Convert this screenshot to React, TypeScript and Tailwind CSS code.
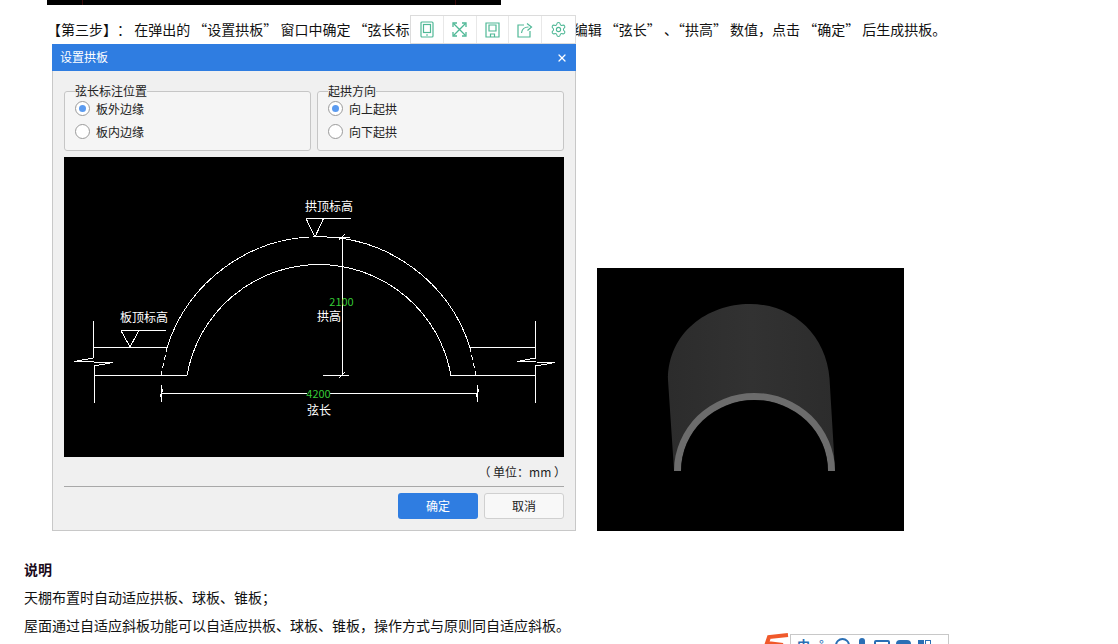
import React from 'react';
import { Settings, X } from 'lucide-react';

const font = 'font-["Noto_Sans_CJK_SC","Microsoft_YaHei","Liberation_Sans",sans-serif]';

/**Floating toolbar over the article text*/
function ToolButton({ children, last }: { children: React.ReactNode; last?: boolean }) {
  return (
    <div className={`flex h-full w-[33px] items-center justify-center text-[#4fb896] ${last ? '' : 'border-r border-[#e8e8e8]'}`}>
      {children}
    </div>
  );
}

function Toolbar() {
  return (
    <div className="absolute left-[410px] top-[15px] z-10 flex h-[29px] w-[166px] border border-[#dcdcdc] bg-white">
      <ToolButton>
        <svg width="14" height="17" viewBox="0 0 14 17" fill="none" stroke="currentColor" strokeWidth="1.2">
          <rect x="1" y="1" width="12" height="15" rx="1" />
          <rect x="3.5" y="3.5" width="7" height="8" />
          <path d="M6 14h2" />
        </svg>
      </ToolButton>
      <ToolButton>
        <svg width="15" height="15" viewBox="0 0 15 15" fill="none" stroke="currentColor" strokeWidth="1.3">
          <path d="M1.5 1.5l12 12M13.5 1.5l-12 12" />
          <path d="M1 5V1h4M10 1h4v4M14 10v4h-4M5 14H1v-4" />
        </svg>
      </ToolButton>
      <ToolButton>
        <svg width="15" height="16" viewBox="0 0 15 16" fill="none" stroke="currentColor" strokeWidth="1.2">
          <path d="M1 1h13v14H1z" />
          <path d="M4 3h7v6H4z" />
          <path d="M5.5 15v-3h4v3" />
        </svg>
      </ToolButton>
      <ToolButton>
        <svg width="16" height="16" viewBox="0 0 16 16" fill="none" stroke="currentColor" strokeWidth="1.2">
          <path d="M7 3H1v12h12V9" />
          <path d="M4.5 11c.5-4 3-6 7-6" />
          <path d="M10 1.5l4.5 3.5-4 3.5" />
        </svg>
      </ToolButton>
      <ToolButton last>
        <Settings size={17} strokeWidth={1.5} />
      </ToolButton>
    </div>
  );
}

function Radio({ label, checked }: { label: string; checked?: boolean }) {
  return (
    <div className="flex h-[23px] items-center gap-[6px]">
      <span className="flex h-[15px] w-[15px] items-center justify-center rounded-full border border-[#9a9a9a] bg-white">
        {checked && <span className="h-[7px] w-[7px] rounded-full bg-[#5b9bf0]" />}
      </span>
      <span className="text-xs text-[#222]">{label}</span>
    </div>
  );
}

function OptionGroup({ title, options }: { title: string; options: string[] }) {
  return (
    <fieldset className="h-[67px] flex-1 rounded-[3px] border border-[#c6c6c6] bg-[#f5f5f5] pl-[10px]">
      <legend className="bg-[#f0f0f0] text-xs leading-[14px] text-[#222]">{title}</legend>
      <div className="-mt-px">
        {options.map((o, i) => (
          <Radio key={o} label={o} checked={i === 0} />
        ))}
      </div>
    </fieldset>
  );
}

/**The CAD sketch of the arched slab*/
function ArchDrawing() {
  const t = { fill: '#fff', fontSize: 12, textAnchor: 'middle' as const };
  const g = { fill: '#35c935', fontSize: 11, textAnchor: 'middle' as const };
  return (
    <svg width="500" height="300" viewBox="0 0 500 300" className="block bg-black" fill="none" stroke="#fff" strokeWidth="1">
      <g shapeRendering="crispEdges">
        <path d="M29.5 164V201L10 204.5 49 205.5 30 209V246" />
        <path d="M471.5 164V201L453 204.5 491 205.5 471.5 209V246" />
        <path d="M30 190.5H103M30 218.5H123M406 190.5H471M387 218.5H471" />
        <path d="M103 190.5A159 159 0 0 1 406 190.5" />
        <path d="M103 190.5L97 218.5M406 190.5L412 218.5" strokeDasharray="5 3" />
        <path d="M123 218.5A134 134 0 0 1 387 218.5" />
        <path d="M57 173.5H102M57 173.5L66 190L75 173.5" />
        <path d="M242 61.5H287M242 61.5L251 80L259.5 61.5" />
        <path d="M278.5 80V218M259 218.5H285M270 80.5H286M275 221L281 215M275 83L281 77" />
        <path d="M97.5 228V245M96 240L99 232M97 236.5H243M266 236.5H413M413.5 228V245M412 240L415 232" />
      </g>
      <g stroke="none">
        <text x="80" y="165" {...t}>板顶标高</text>
        <text x="265" y="54" {...t}>拱顶标高</text>
        <text x="265" y="164" {...t}>拱高</text>
        <text x="255" y="258" {...t}>弦长</text>
        <text x="277.5" y="149" {...g}>2100</text>
        <text x="254.5" y="241" {...g}>4200</text>
      </g>
    </svg>
  );
}

function Dialog() {
  return (
    <div className="h-[487px] w-[524px] border border-t-0 border-[#c8c8c8] bg-[#f0f0f0]">
      <div className="-mx-px flex h-[27px] items-center justify-between bg-[#2f7de1] pb-[2px] pl-2 pr-2 text-xs text-white">
        <span>设置拱板</span>
        <X size={12} strokeWidth={2.5} className="mt-[2px]" />
      </div>
      <div className="px-[11px]">
        <div className="mt-[13px] flex gap-[6px]">
          <OptionGroup title="弦长标注位置" options={['板外边缘', '板内边缘']} />
          <OptionGroup title="起拱方向" options={['向上起拱', '向下起拱']} />
        </div>
        <div className="mt-[6px]">
          <ArchDrawing />
        </div>
        <div className="-mr-[2px] flex h-[29px] items-center justify-end text-xs text-[#222]">（ 单位：mm ）</div>
        <div className="border-t border-[#a8a8a8]" />
        <div className="mt-[6px] flex justify-end gap-[6px] text-xs">
          <button className="h-[26px] w-[80px] rounded-[3px] bg-[#2f7de1] text-white">确定</button>
          <button className="h-[26px] w-[80px] rounded-[3px] border border-[#d0d0d0] bg-[#f8f8f8] text-[#222]">取消</button>
        </div>
      </div>
    </div>
  );
}

/**Rendered 3D preview of the arch*/
function ArchPreview() {
  return (
    <svg width="307" height="263" viewBox="0 0 307 263" className="block bg-black">
      <defs>
        <linearGradient id="shell" x1="0" y1="0" x2="1" y2="0">
          <stop offset="0" stopColor="#2c2c2c" />
          <stop offset="0.5" stopColor="#323232" />
          <stop offset="1" stopColor="#2c2c2c" />
        </linearGradient>
      </defs>
      <path d="M77 202L71 112C71 65 110 36 153 36C198 36 233 70 233 119L238 202Z" fill="url(#shell)" />
      <path d="M77 203A80.5 78 0 0 1 238 203H231A73.5 71 0 0 0 84 203Z" fill="#6c6c6c" />
      <path d="M84 203A73.5 71 0 0 1 231 203Z" fill="#000" />
    </svg>
  );
}

/**Input method bar cut off by the bottom of the window*/
function ImeBar() {
  return (
    <div className="absolute left-[763px] top-[632px] z-10 h-[24px] w-[186px]">
      <div className="ml-[27px] mt-[2px] flex h-[22px] items-start border border-[#c8c8c8] bg-white pt-[2px] text-[13px] leading-[16px] text-[#2a6fb5]">
        <span className="ml-[6px] w-[16px] font-bold">中</span>
        <span className="ml-[6px] w-[10px]">°</span>
        <span className="ml-[6px] mt-px h-[15px] w-[15px] rounded-full border-2 border-[#2a6fb5]" />
        <span className="ml-[9px] mt-px h-[15px] w-[6px] rounded-full bg-[#2a6fb5]" />
        <span className="ml-[9px] mt-[3px] h-[13px] w-[16px] rounded-[2px] border-2 border-[#2a6fb5]" />
        <span className="ml-[6px] mt-[3px] h-[13px] w-[15px] rounded-t-[4px] bg-[#2a6fb5]" />
        <span className="ml-[7px] mt-[3px] flex gap-px">
          <span className="h-[13px] w-[6px] bg-[#2a6fb5]" />
          <span className="h-[13px] w-[6px] border border-[#2a6fb5]" />
        </span>
      </div>
      <svg width="28" height="14" viewBox="0 0 28 14" className="absolute left-0 top-0" fill="none" stroke="#f0592b" strokeWidth="4">
        <path d="M25 3L6 5 4 11 20 13" />
      </svg>
    </div>
  );
}

export default function App() {
  return (
    <div className={`relative h-[644px] w-[1118px] overflow-hidden bg-white text-sm text-[#111] ${font}`}>
      <div className="ml-[47px] flex h-[5px] w-[454px] justify-between bg-black pl-[35px] pr-[45px]">
        <span className="h-full w-px bg-[#3a0a0a]" />
        <span className="h-full w-px bg-[#3a0a0a]" />
      </div>
      <p className="ml-[47px] mt-[10px] h-[29px] whitespace-nowrap leading-[28px]">
        <span className="[text-spacing-trim:space-all]">【第三步】：</span> 在弹出的 “设置拱板” 窗口中确定 “弦长标注位置” “起拱方向”，并编辑 “弦长” 、“拱高” 数值，点击 “确定” 后生成拱板。
      </p>
      <Toolbar />
      <div className="ml-[52px] flex items-end gap-[21px]">
        <Dialog />
        <ArchPreview />
      </div>
      <div className="ml-[24px] mt-[24px] leading-[28px]">
        <p className="font-bold text-[#1a0a1a]">说明</p>
        <p>天棚布置时自动适应拱板、球板、锥板；</p>
        <p>屋面通过自适应斜板功能可以自适应拱板、球板、锥板，操作方式与原则同自适应斜板。</p>
      </div>
      <ImeBar />
    </div>
  );
}
